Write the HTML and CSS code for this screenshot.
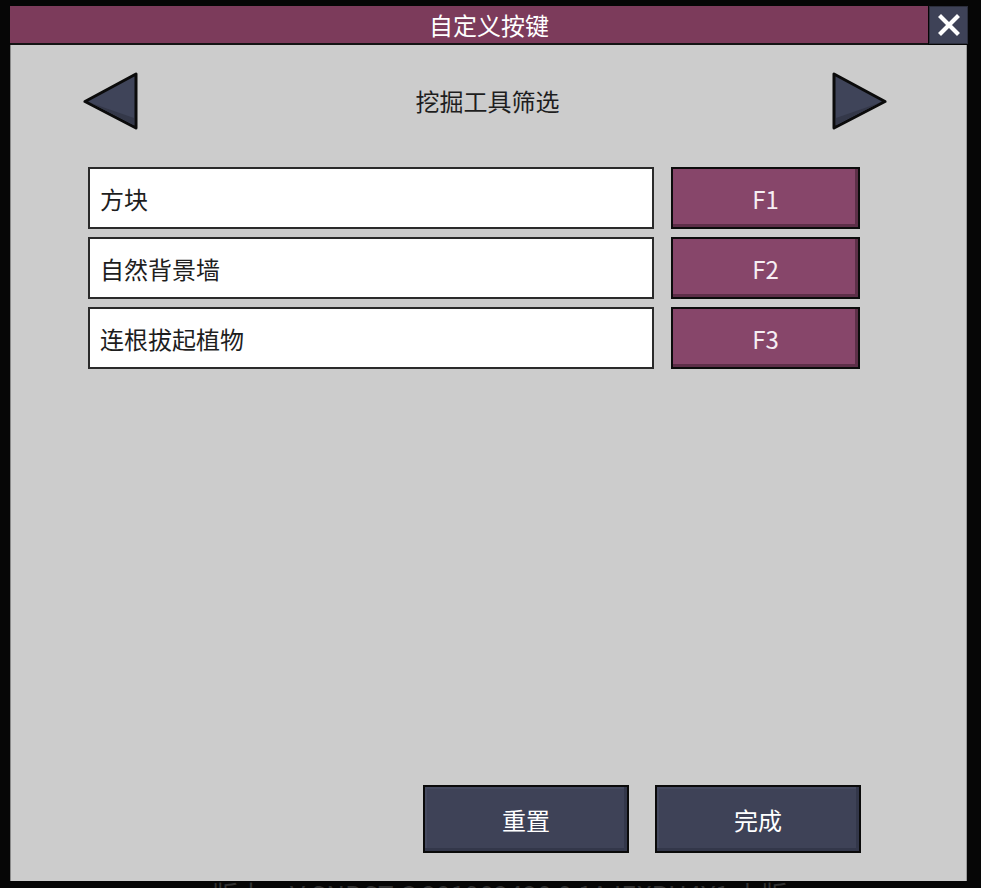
FILE: index.html
```html
<!DOCTYPE html>
<html lang="zh">
<head>
<meta charset="utf-8">
<title>自定义按键</title>
<link rel="stylesheet" href="styles.css">
</head>
<body>
<div class="stage">
  <div class="dialog">
    <div class="titlebar">
      <div class="title">自定义按键</div>
      <button class="close" aria-label="关闭">
        <svg width="22" height="22" viewBox="0 0 22 22"><path d="M3 3 L19 19 M19 3 L3 19" stroke="#ffffff" stroke-width="4.2" stroke-linecap="square" fill="none"/></svg>
      </button>
    </div>
    <div class="panel">
      <div class="nav">
        <svg class="arrow" width="56" height="58" viewBox="0 0 56 58">
          <polygon points="53,2 53,56 2,29.5" fill="#3f4459" stroke="#0b0b0b" stroke-width="3" stroke-linejoin="round"/>
          <polygon points="51,46 51,53 8,31" fill="#343849"/>
        </svg>
        <div class="subtitle">挖掘工具筛选</div>
        <svg class="arrow" width="56" height="58" viewBox="0 0 56 58">
          <polygon points="3,2 3,56 54,29.5" fill="#3f4459" stroke="#0b0b0b" stroke-width="3" stroke-linejoin="round"/>
          <polygon points="5,46 5,53 48,31" fill="#343849"/>
        </svg>
      </div>
      <div class="rows">
        <div class="row">
          <div class="label">方块</div>
          <div class="key">F1</div>
        </div>
        <div class="row">
          <div class="label">自然背景墙</div>
          <div class="key">F2</div>
        </div>
        <div class="row">
          <div class="label">连根拔起植物</div>
          <div class="key">F3</div>
        </div>
      </div>
      <div class="footer">
        <div class="btn">重置</div>
        <div class="btn">完成</div>
      </div>
    </div>
  </div>
  <div class="version">版本：V SNDST C 201902420 0 1A IEXPU4Y1 上版</div>
</div>
</body>
</html>
```
FILE: styles.css
```css
html, body {
  margin: 0;
  padding: 0;
}
body {
  width: 981px;
  height: 888px;
  overflow: hidden;
  background: #060606;
  font-family: "Noto Sans CJK SC", "Noto Sans", sans-serif;
}
.stage {
  position: relative;
  height: 888px;
  padding: 6px 0 0 10px;
  box-sizing: border-box;
}
.dialog {
  width: 958px;
  display: flex;
  flex-direction: column;
}
.titlebar {
  display: flex;
  height: 39px;
}
.title {
  flex: 1;
  background: #7c3b5b;
  border-bottom: 2px solid #141414;
  color: #ffffff;
  font-size: 24px;
  line-height: 37px;
  text-align: center;
  margin-right: 1px;
  padding-left: 40px;
}
.close {
  width: 39px;
  height: 38px;
  padding: 0;
  margin: 0;
  border: 1px solid #2c2f3d;
  background: #3e4257;
  display: flex;
  align-items: center;
  justify-content: center;
  box-sizing: border-box;
}
.panel {
  height: 836px;
  width: 957px;
  box-sizing: border-box;
  background: #cccccc;
  border-left: 1px solid #8a8a8a;
  border-right: 1px solid #9a9a9a;
  display: flex;
  flex-direction: column;
  padding: 27px 79px 28px 72px;
}
.nav {
  display: flex;
  align-items: center;
  justify-content: space-between;
  height: 58px;
}
.subtitle {
  font-size: 24px;
  color: #1e1e1e;
  margin-left: 5px;
  margin-top: -2px;
}
.rows {
  margin-top: 37px;
  margin-left: 5px;
  display: flex;
  flex-direction: column;
  gap: 8px;
}
.row {
  display: flex;
  gap: 17px;
  height: 62px;
}
.label {
  width: 566px;
  box-sizing: border-box;
  background: #ffffff;
  border: 2px solid #2a2a2a;
  font-size: 24px;
  color: #1e1e1e;
  display: flex;
  align-items: center;
  padding-left: 10px;
}
.key {
  width: 189px;
  box-sizing: border-box;
  background: #87466a;
  border: 2px solid #0c0c0c;
  box-shadow: inset -3px -3px 0 #5d2f48;
  color: #f6eef3;
  font-size: 24px;
  display: flex;
  align-items: center;
  justify-content: center;
}
.footer {
  margin-top: auto;
  display: flex;
  justify-content: flex-end;
  gap: 26px;
  padding-right: 26px;
}
.btn {
  width: 206px;
  height: 68px;
  box-sizing: border-box;
  background: #3e4257;
  border: 2px solid #0a0a0a;
  box-shadow: inset -3px -3px 0 #33374a, inset 2px 2px 0 #454a60;
  color: #ffffff;
  font-size: 24px;
  display: flex;
  align-items: center;
  justify-content: center;
}
.version {
  position: absolute;
  left: 212px;
  top: 875px;
  font-size: 26px;
  color: #333333;
  white-space: nowrap;
  z-index: -1;
}
```
